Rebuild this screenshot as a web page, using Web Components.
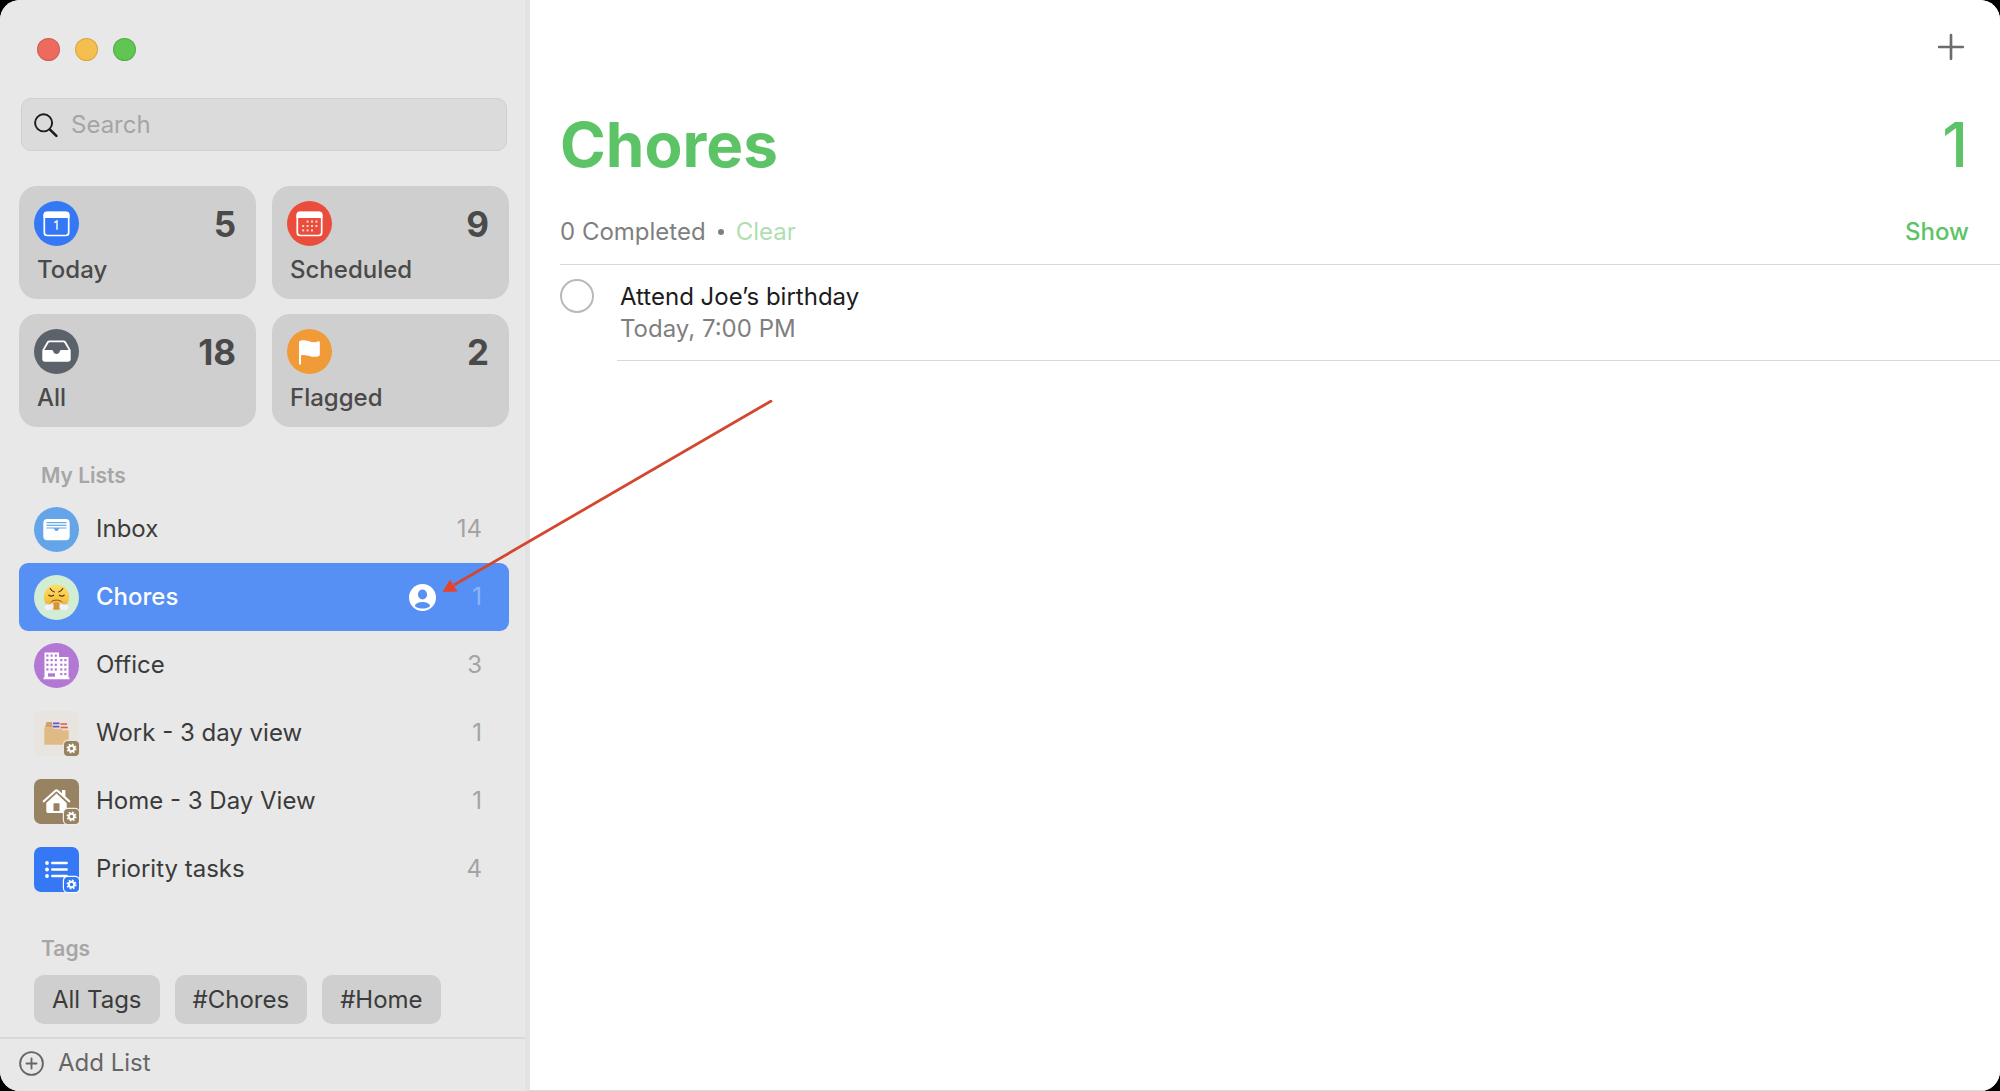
<!DOCTYPE html>
<html lang="en">
<head>
<meta charset="utf-8">
<meta name="viewport" content="width=device-width, initial-scale=1">
<title>Reminders</title>
<style>
  html, body {
    margin: 0;
    height: 100%;
    background: #000;
  }
  body {
    font-family: Inter, "Liberation Sans", sans-serif;
    font-size: 24px;
    line-height: 32px;
    color: #3b3b3b;
  }
</style>
</head>
<body>
<reminders-window>
  <side-bar slot="sidebar">
    <smart-card slot="card" icon="today" label="Today" count="5"></smart-card>
    <smart-card slot="card" icon="scheduled" label="Scheduled" count="9"></smart-card>
    <smart-card slot="card" icon="all" label="All" count="18"></smart-card>
    <smart-card slot="card" icon="flagged" label="Flagged" count="2"></smart-card>

    <list-row slot="list" icon="inbox" count="14">Inbox</list-row>
    <list-row slot="list" icon="chores" count="1" selected shared>Chores</list-row>
    <list-row slot="list" icon="office" count="3">Office</list-row>
    <list-row slot="list" icon="work" count="1">Work - 3 day view</list-row>
    <list-row slot="list" icon="home" count="1">Home - 3 Day View</list-row>
    <list-row slot="list" icon="priority" count="4">Priority tasks</list-row>

    <tag-chip slot="tag">All Tags</tag-chip>
    <tag-chip slot="tag">#Chores</tag-chip>
    <tag-chip slot="tag">#Home</tag-chip>
  </side-bar>
  <list-view heading="Chores" count="1" completed="0">
    <task-item due="Today, 7:00 PM">Attend Joe’s birthday</task-item>
  </list-view>
  <arrow-note slot="overlay"></arrow-note>
</reminders-window>

<script>
// Small gear badge in the bottom right corner of smart list icons
const gearBadge = (fill, ring) => `
  <rect x="28.8" y="28.8" width="17.2" height="17.2" rx="5" fill="${ring}"/>
  <rect x="30" y="30" width="15" height="15" rx="4" fill="${fill}"/>
  <circle cx="37.5" cy="37.5" r="2.7" fill="none" stroke="#fff" stroke-width="2"/>
  <circle cx="37.5" cy="37.5" r="4.2" fill="none" stroke="#fff" stroke-width="1.6" stroke-dasharray="1.65 1.65"/>`;

const dots = (points, size, fill) => points
  .map(([x, y]) => `<rect x="${x}" y="${y}" width="${size}" height="${size}" fill="${fill}"/>`)
  .join("");

const grid = (xs, ys) => ys.flatMap((y) => xs.map((x) => [x, y]));

const ICONS = {
  today: `
    <circle cx="22.5" cy="22.5" r="22.5" fill="#3478f6"/>
    <rect x="10.3" y="11.5" width="24.4" height="23" rx="3" fill="none" stroke="#fff" stroke-width="1.7"/>
    <path d="M9.5 17v-3a3.4 3.4 0 0 1 3.4-3.4h19.2a3.4 3.4 0 0 1 3.4 3.4v3z" fill="#fff"/>
    <path d="M20.3 21.6 23 19.9v8.9" fill="none" stroke="#fff" stroke-width="1.4"/>`,
  scheduled: `
    <circle cx="22.5" cy="22.5" r="22.5" fill="#eb4d3d"/>
    <rect x="10.3" y="11.5" width="24.4" height="23" rx="3" fill="none" stroke="#fff" stroke-width="1.7"/>
    <path d="M9.5 17v-3a3.4 3.4 0 0 1 3.4-3.4h19.2a3.4 3.4 0 0 1 3.4 3.4v3z" fill="#fff"/>
    ${dots([...grid([19.6, 24, 28.4], [19.6]), ...grid([15.2, 19.6, 24, 28.4], [24]), ...grid([15.2, 19.6, 24], [28.4])], 2, "#fbd5d1")}`,
  all: `
    <circle cx="22.5" cy="22.5" r="22.5" fill="#5b626a"/>
    <path fill-rule="evenodd" fill="#fff" d="M15.5 11.5h14c1.2 0 2 .5 2.6 1.5l4 7c.5.8.6 1.4.6 2.2v7.800c0 1.800-1 2.700-2.700 2.700h-23c-1.700 0-2.700-.9-2.700-2.700v-7.800c0-.8.1-1.400.6-2.200l4-7c.6-1 1.400-1.500 2.600-1.500zM15.700 13.300c-.6 0-.9.200-1.200.7l-4.200 7h7.400c.9 0 1.300.6 1.500 1.300.5 1.700 1.600 2.700 3.300 2.700s2.800-1 3.300-2.700c.2-.7.6-1.300 1.500-1.300h7.400l-4.200-7c-.3-.5-.6-.7-1.200-.7z"/>`,
  flagged: `
    <circle cx="22.5" cy="22.5" r="22.5" fill="#f19a38"/>
    <path fill="#fff" d="M12 12.600c1.500-1.200 3.400-1.500 5.500-1.300 3.600.3 6.500 2.300 10.500 1.900 1.500-.1 2.600-.6 3.600-.9.800-.2 1.200.2 1.200.9v12.400c0 .8-.4 1.300-1.200 1.600-2.300.8-5 .8-7.800.2-3.300-.7-6.400-1.800-9.800-1v8.200c0 .7-.4 1.100-1 1.100s-1-.4-1-1.100z"/>`,
  inbox: `
    <circle cx="22.5" cy="22.5" r="22.5" fill="#64a5e9"/>
    <rect x="9.3" y="12" width="26.4" height="21.2" rx="4" fill="#fff"/>
    <g fill="#64a5e9"><rect x="12.5" y="15" width="20" height="1.2"/><rect x="12.5" y="17.7" width="20" height="1.2"/>
    <path d="M12.500 20.400h20v1.200h-7c-.6 0-.8.3-1 .8-.4 1-1 1.500-2 1.500s-1.600-.5-2-1.500c-.2-.5-.4-.8-1-.8h-7z"/></g>`,
  chores: `
    <defs>
      <linearGradient id="face" x1="0" y1="0" x2="0" y2="1"><stop offset="0" stop-color="#fbdf6a"/><stop offset=".6" stop-color="#f6c547"/><stop offset="1" stop-color="#e79a3a"/></linearGradient>
    </defs>
    <circle cx="22.5" cy="22.5" r="22.5" fill="#d1edd3"/>
    <circle cx="22.5" cy="22" r="12.6" fill="url(#face)"/>
    <g fill="none" stroke="#5d3512" stroke-width="1.1" stroke-linecap="round">
      <path d="M16.200 13.600c.8 1.700 2.200 2.900 4.200 3.400M28.800 13.600c-.8 1.700-2.200 2.900-4.200 3.400"/>
      <path d="M14.800 20.200c1.400 1.100 3.400 1.100 4.800 0M25.400 20.200c1.400 1.100 3.400 1.100 4.800 0"/>
      <path d="M17 27c1.600-2.600 9.400-2.600 11 0" stroke="#85501c" stroke-width="1"/>
    </g>
    <path d="M20 27.500h5v6.700a12 12 0 0 1-5 0z" fill="#d9923c"/>
    <g fill="#f1f3f8" stroke="#d4d9e2" stroke-width=".4">
      <path d="M18.500 28c1.200 2.700 1.400 5-.2 6.600-1.300 1.100-2.700.4-3.500.8-1.600.7-3.300 0-3.500-1.600-1.700-.7-1.600-2.900 0-3.400.8-1.400 2.500-1.500 3.400-.8 1.200-.2 2.700-.6 3.800-1.600z"/>
      <path d="M26.500 28c-1.200 2.700-1.400 5 .2 6.600 1.300 1.100 2.700.4 3.500.8 1.600.7 3.300 0 3.500-1.600 1.700-.7 1.600-2.900 0-3.400-.8-1.400-2.500-1.500-3.400-.8-1.200-.2-2.700-.6-3.800-1.600z"/>
    </g>`,
  office: `
    <circle cx="22.5" cy="22.5" r="22.5" fill="#b278d4"/>
    <path d="M10.5 9.500h14.500v4.500h9.500v20.500h1v1.700h-26v-1.700h1z" fill="#fff"/>
    ${dots([...grid([12.3, 16.5, 20.7], [11.5, 16, 20.7, 25.4]), ...grid([26.2, 30.3], [16, 20.7, 25.4, 30])], 2.2, "#b278d4")}
    <rect x="14" y="30.3" width="7" height="3.4" fill="#b278d4"/>`,
  work: `
    <rect width="45" height="45" rx="7" fill="#e8e4df"/>
    <path d="M11 16.500 12.500 11h5.500l.8 5.500z" fill="#cda36a"/>
    <rect x="19" y="10.500" width="6.500" height="8" fill="#e9e2ea"/>
    <path d="M19 12.300h6.500M19 15.600h6.500" stroke="#6a55b8" stroke-width="1.800"/>
    <rect x="26.500" y="12" width="6.800" height="7" fill="#ecd8cc"/>
    <path d="M26.500 13h6.500M26.800 16.500h7" stroke="#d2604e" stroke-width="1.700"/>
    <path d="M10.300 16.500h8l1.200 1.300h7.500l1.200 1.500h6.500v14.500H10.300z" fill="#dfba84"/>
    ${gearBadge("#978362", "#e8e4df")}`,
  home: `
    <rect width="45" height="45" rx="7" fill="#978362"/>
    <path d="M9.800 22.300 21.200 12a1.900 1.900 0 0 1 2.600 0l11.400 10.300" fill="none" stroke="#fff" stroke-width="2.200" stroke-linecap="round" stroke-linejoin="round"/>
    <path d="M28 11h3.400v8.500l-3.400-3z" fill="#fff"/>
    <path fill-rule="evenodd" fill="#fff" d="M22.500 14.600 32.700 24v8c0 1.500-.6 2-2 2H14.300c-1.400 0-2-.5-2-2v-8zM19.500 24.300v7.700h6v-7.700z"/>
    ${gearBadge("#978362", "#f1eee8")}`,
  priority: `
    <rect width="45" height="45" rx="7" fill="#3478f6"/>
    <g stroke="#fff" stroke-width="2.400" stroke-linecap="round"><path d="M18.200 16h14.500M18.200 22.500h14.500M18.200 29h14.500"/></g>
    <g fill="#fff"><circle cx="13" cy="16" r="1.900"/><circle cx="13" cy="22.500" r="1.900"/><circle cx="13" cy="29" r="1.900"/></g>
    ${gearBadge("#3478f6", "#fff")}`,
  person: `
    <circle cx="22.5" cy="22.5" r="22.5" fill="#fff"/>
    <ellipse cx="22.5" cy="17.5" rx="7.6" ry="8.5" fill="#5690f5"/>
    <path d="M9.500 36.500c1.500-4.200 6.500-6.300 13-6.300s11.500 2.100 13 6.300c-3.500 3-8 4.300-13 4.300s-9.500-1.300-13-4.300z" fill="#5690f5"/>`,
  search: `
    <g fill="none" stroke="#1c1c1c" stroke-linecap="round"><circle cx="18" cy="18.500" r="16" stroke-width="3.600"/><path d="M30 31 42 43" stroke-width="4.800"/></g>`,
  add: `
    <g fill="none" stroke="#666" stroke-width="3.400" stroke-linecap="round"><circle cx="22.500" cy="22.500" r="20.500"/><path d="M22.500 13.500v18M13.500 22.500h18"/></g>`,
  plus: `
    <path d="M22.500 2v41M2 22.500h41" fill="none" stroke="#6c6c6c" stroke-width="4.600" stroke-linecap="round"/>`
};

// Resets shared by every element that draws a button
const BUTTON_RESET = `
  button {
    appearance: none;
    margin: 0;
    padding: 0;
    border: 0;
    background: none;
    font: inherit;
    color: inherit;
    text-align: left;
    cursor: default;
  }
`;

class AppIcon extends HTMLElement {
  connectedCallback() {
    this.attachShadow({ mode: "open" });
    this.shadowRoot.innerHTML = `
      <style>
        :host { display: block; flex: none; width: 45px; height: 45px; }
        svg { display: block; width: 100%; height: 100%; overflow: visible; }
      </style>
      <svg viewBox="0 0 45 45" aria-hidden="true">${ICONS[this.getAttribute("name")]}</svg>
    `;
  }
}

class RemindersWindow extends HTMLElement {
  connectedCallback() {
    this.attachShadow({ mode: "open" });
    this.shadowRoot.innerHTML = `
      <style>
        :host {
          display: flex;
          position: relative;
          min-height: 100vh;
          box-sizing: border-box;
          border-radius: 20px;
          overflow: hidden;
          background: #fff;
        }
      </style>
      <slot name="sidebar"></slot>
      <slot></slot>
      <slot name="overlay"></slot>
    `;
  }
}

class WindowControls extends HTMLElement {
  connectedCallback() {
    this.attachShadow({ mode: "open" });
    this.shadowRoot.innerHTML = `
      <style>
        ${BUTTON_RESET}
        :host { display: flex; gap: 15px; }
        button {
          width: 23px;
          height: 23px;
          border-radius: 50%;
          box-shadow: inset 0 0 0 1px rgba(0, 0, 0, 0.12);
        }
        .close { background: #ed6a5e; }
        .minimize { background: #f5bf4f; }
        .zoom { background: #61c554; }
      </style>
      <button class="close" aria-label="Close"></button>
      <button class="minimize" aria-label="Minimize"></button>
      <button class="zoom" aria-label="Zoom"></button>
    `;
  }
}

class SearchField extends HTMLElement {
  connectedCallback() {
    this.attachShadow({ mode: "open" });
    this.shadowRoot.innerHTML = `
      <style>
        :host { display: block; }
        label {
          display: flex;
          align-items: center;
          gap: 13px;
          height: 53px;
          padding: 0 12px;
          box-sizing: border-box;
          border: 1px solid #cfcfcf;
          border-radius: 10px;
          background: #dbdbdb;
        }
        app-icon { width: 24px; height: 24px; }
        input {
          flex: 1;
          min-width: 0;
          padding: 0;
          border: 0;
          outline: 0;
          background: none;
          font: inherit;
          color: #3b3b3b;
        }
        input::placeholder { color: #a5a5a5; opacity: 1; }
      </style>
      <label>
        <app-icon name="search"></app-icon>
        <input type="search" placeholder="Search" aria-label="Search">
      </label>
    `;
  }
}

class SideBar extends HTMLElement {
  connectedCallback() {
    this.attachShadow({ mode: "open" });
    this.shadowRoot.innerHTML = `
      <style>
        ${BUTTON_RESET}
        :host {
          display: flex;
          flex-direction: column;
          flex: none;
          width: 530px;
          box-sizing: border-box;
          border-right: 5px solid #e2e2e2;
          background: #e8e8e8;
        }
        .body {
          flex: 1;
          padding: 38px 16px 11px 19px;
        }
        window-controls { padding-left: 18px; }
        search-field { margin: 37px 2px 35px; }
        .cards {
          display: grid;
          grid-template-columns: 1fr 1fr;
          gap: 15px 16px;
        }
        h2 {
          margin: 0;
          padding-left: 22px;
          font-size: 21px;
          line-height: 28px;
          font-weight: 600;
          color: #a6a6a6;
        }
        .lists-title { margin-top: 35px; margin-bottom: 5px; }
        .tags-title { margin-top: 32px; margin-bottom: 12px; }
        .tags {
          display: flex;
          gap: 15px;
          padding-left: 15px;
        }
        .footer {
          display: flex;
          border-top: 2px solid #d8d8d8;
          padding: 9px 19px 13px;
        }
        .add {
          display: flex;
          align-items: center;
          gap: 14px;
          line-height: 30px;
          color: #666;
        }
        .add app-icon { width: 25px; height: 25px; }
      </style>
      <div class="body">
        <window-controls></window-controls>
        <search-field></search-field>
        <div class="cards"><slot name="card"></slot></div>
        <h2 class="lists-title">My Lists</h2>
        <nav aria-label="My Lists"><slot name="list"></slot></nav>
        <h2 class="tags-title">Tags</h2>
        <div class="tags"><slot name="tag"></slot></div>
      </div>
      <div class="footer">
        <button class="add"><app-icon name="add"></app-icon>Add List</button>
      </div>
    `;
  }
}

class SmartCard extends HTMLElement {
  connectedCallback() {
    this.attachShadow({ mode: "open" });
    this.shadowRoot.innerHTML = `
      <style>
        ${BUTTON_RESET}
        :host { display: block; }
        button {
          display: flex;
          flex-direction: column;
          align-items: stretch;
          gap: 10px;
          width: 100%;
          padding: 15px 20px 15px 15px;
          border-radius: 18px;
          background: #cfcfcf;
          color: #4a4a4a;
        }
        .top {
          display: flex;
          align-items: center;
          justify-content: space-between;
        }
        .count {
          font-size: 35px;
          font-weight: 700;
        }
        .label {
          padding-left: 3px;
          line-height: 28px;
          font-weight: 500;
        }
      </style>
      <button>
        <span class="top">
          <app-icon name="${this.getAttribute("icon")}"></app-icon>
          <span class="count">${this.getAttribute("count")}</span>
        </span>
        <span class="label">${this.getAttribute("label")}</span>
      </button>
    `;
  }
}

class ListRow extends HTMLElement {
  connectedCallback() {
    const shared = this.hasAttribute("shared")
      ? `<app-icon class="shared" name="person"></app-icon>`
      : "";
    this.attachShadow({ mode: "open" });
    this.shadowRoot.innerHTML = `
      <style>
        ${BUTTON_RESET}
        :host { display: block; }
        button {
          display: flex;
          align-items: center;
          width: 100%;
          height: 68px;
          padding: 0 27px 0 15px;
          border-radius: 9px;
        }
        .label { flex: 1; padding-left: 17px; }
        .shared { width: 27px; height: 27px; }
        .count { min-width: 46px; text-align: right; color: #a3a3a3; }
        :host([selected]) button { background: #5690f5; color: #fff; }
        :host([selected]) .label { font-weight: 500; }
        :host([selected]) .count { color: #8db5fa; }
      </style>
      <button>
        <app-icon name="${this.getAttribute("icon")}"></app-icon>
        <span class="label"><slot></slot></span>
        ${shared}
        <span class="count">${this.getAttribute("count")}</span>
      </button>
    `;
  }
}

class TagChip extends HTMLElement {
  connectedCallback() {
    this.attachShadow({ mode: "open" });
    this.shadowRoot.innerHTML = `
      <style>
        ${BUTTON_RESET}
        :host { display: block; }
        button {
          height: 49px;
          padding: 0 18px;
          border-radius: 10px;
          background: #cfcfcf;
          white-space: nowrap;
        }
      </style>
      <button><slot></slot></button>
    `;
  }
}

class ListView extends HTMLElement {
  connectedCallback() {
    this.attachShadow({ mode: "open" });
    this.shadowRoot.innerHTML = `
      <style>
        ${BUTTON_RESET}
        :host {
          display: block;
          flex: 1;
          min-width: 0;
          box-sizing: border-box;
          padding-left: 30px;
          border-bottom: 1px solid #dcdcdc;
          background: #fff;
        }
        .toolbar {
          display: flex;
          align-items: center;
          justify-content: flex-end;
          height: 94px;
          padding-right: 36px;
        }
        .toolbar app-icon { width: 26px; height: 26px; }
        header {
          display: flex;
          justify-content: space-between;
          padding-right: 32px;
          font-size: 62px;
          line-height: 102px;
          font-weight: 500;
          color: #5cc466;
        }
        h1 { margin: 0; font-size: inherit; font-weight: 700; }
        .summary {
          display: flex;
          align-items: center;
          height: 64px;
          padding: 4px 31px 0 0;
          border-bottom: 1px solid #d8d8d8;
          color: #7f7f7f;
        }
        .dot {
          width: 6px;
          height: 6px;
          margin: 0 12px;
          border-radius: 50%;
          background: #7f7f7f;
        }
        .clear { color: #aedfb2; }
        .show { margin-left: auto; font-weight: 500; color: #5cc466; }
      </style>
      <div class="toolbar">
        <button aria-label="New Reminder"><app-icon name="plus"></app-icon></button>
      </div>
      <header>
        <h1>${this.getAttribute("heading")}</h1>
        <span>${this.getAttribute("count")}</span>
      </header>
      <div class="summary">
        <span>${this.getAttribute("completed")} Completed</span>
        <span class="dot"></span>
        <button class="clear">Clear</button>
        <button class="show">Show</button>
      </div>
      <slot></slot>
    `;
  }
}

class TaskItem extends HTMLElement {
  connectedCallback() {
    this.attachShadow({ mode: "open" });
    this.shadowRoot.innerHTML = `
      <style>
        :host { display: flex; gap: 23px; }
        input {
          appearance: none;
          flex: none;
          width: 34px;
          height: 34px;
          margin: 14px 0 0;
          border: 2px solid #b9b9b9;
          border-radius: 50%;
        }
        .text {
          flex: 1;
          padding: 16px 0 15px 3px;
          border-bottom: 1px solid #d8d8d8;
        }
        label { display: block; color: #1c1c1c; }
        .due { color: #7f7f7f; }
      </style>
      <input type="checkbox" id="done">
      <div class="text">
        <label for="done"><slot></slot></label>
        <div class="due">${this.getAttribute("due")}</div>
      </div>
    `;
  }
}

// Red pointer laid over the window, aimed at the shared-list badge
class ArrowNote extends HTMLElement {
  connectedCallback() {
    this.attachShadow({ mode: "open" });
    this.shadowRoot.innerHTML = `
      <style>
        :host {
          position: absolute;
          left: 442px;
          top: 400px;
          width: 331px;
          height: 194px;
          pointer-events: none;
        }
        svg { display: block; }
      </style>
      <svg width="331" height="194" viewBox="0 0 331 194" aria-hidden="true">
        <path d="M330 .5 12 185" fill="none" stroke="#d4472f" stroke-width="2.800"/>
        <path d="M.5 192 8 179.500 15.500 191.500z" fill="#e8432a"/>
      </svg>
    `;
  }
}

customElements.define("app-icon", AppIcon);
customElements.define("window-controls", WindowControls);
customElements.define("search-field", SearchField);
customElements.define("smart-card", SmartCard);
customElements.define("list-row", ListRow);
customElements.define("tag-chip", TagChip);
customElements.define("side-bar", SideBar);
customElements.define("task-item", TaskItem);
customElements.define("list-view", ListView);
customElements.define("arrow-note", ArrowNote);
customElements.define("reminders-window", RemindersWindow);
</script>
</body>
</html>
